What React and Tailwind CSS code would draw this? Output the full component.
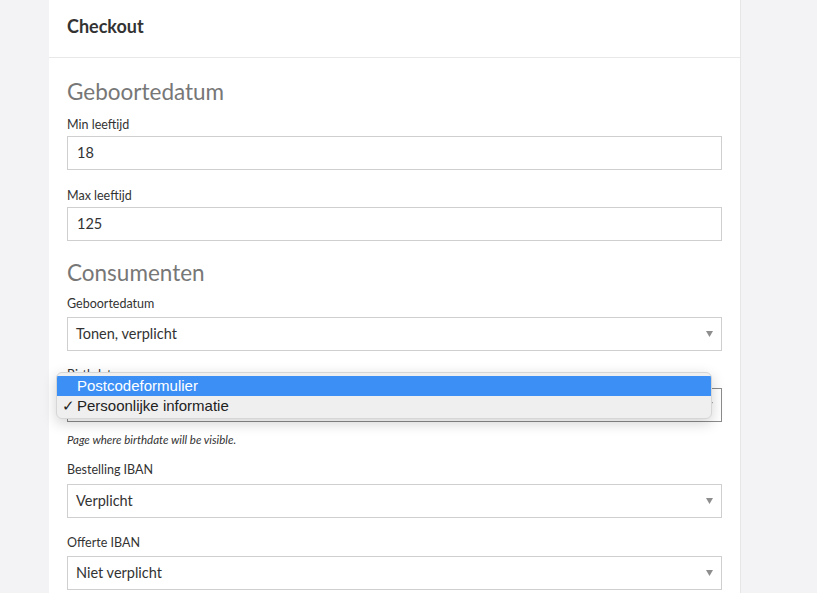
import React from 'react';

const font = { fontFamily: 'Lato, "Open Sans", sans-serif' };

function Caret() {
  return (
    <svg width="7" height="6" viewBox="0 0 7 6" className="shrink-0">
      <path d="M0 0 L7 0 L3.5 6 Z" fill="#8e8e8e" />
    </svg>
  );
}

function Label({ children, className = '' }) {
  return <div className={`text-[12.5px] leading-4 text-[#333] ${className}`}>{children}</div>;
}

function TextField({ value }) {
  return (
    <div className="h-[34px] border border-[#cfcfcf] bg-white flex items-center px-[9px] text-[14.5px] text-[#333]">
      {value}
    </div>
  );
}

function SelectField({ value, focused }) {
  return (
    <div
      className={`h-[34px] border ${focused ? 'border-[#8c8c8c]' : 'border-[#cfcfcf]'} bg-white flex items-center justify-between pl-[8px] pr-[8px] text-[14.5px] text-[#333]`}
    >
      <span>{value}</span>
      <Caret />
    </div>
  );
}

function PageOptions() {
  // native option list opened over the birthdate select
  return (
    <div
      className="absolute left-[-11px] top-[-16px] w-[656px] h-[47px] rounded-[6px] bg-[#efefef] border border-[#d6d6d6] shadow-[0_4px_14px_rgba(0,0,0,0.18)] pt-[3px] text-[15px] leading-[20px] overflow-hidden"
      style={{ fontFamily: '"Liberation Sans", Arial, sans-serif' }}
    >
      <div className="h-[20px] bg-[#3b8ff5] text-white pl-[20px]">Postcodeformulier</div>
      <div className="h-[20px] text-[#222] flex">
        <span className="w-[20px] pl-[5px]">✓</span>
        <span>Persoonlijke informatie</span>
      </div>
    </div>
  );
}

export default function App() {
  return (
    <div className="min-h-screen bg-[#f3f3f5] flex" style={font}>
      <div className="ml-[49px] w-[692px] bg-white border-r border-[#e6e6e6] min-h-[593px]">
        <div className="h-[58px] border-b border-[#e8e8e8] px-[18px] flex items-center pb-[4px]">
          <h1 className="text-[18px] font-bold text-[#333]">Checkout</h1>
        </div>

        <div className="px-[18px] flex flex-col">
          <h2 className="mt-[21px] text-[22.5px] leading-[26px] text-[#777]">Geboortedatum</h2>
          <Label className="mt-[12px] mb-[3px]">Min leeftijd</Label>
          <TextField value="18" />
          <Label className="mt-[18px] mb-[3px]">Max leeftijd</Label>
          <TextField value="125" />

          <h2 className="mt-[19px] text-[22.5px] leading-[26px] text-[#777]">Consumenten</h2>
          <Label className="mt-[10px] mb-[5px]">Geboortedatum</Label>
          <SelectField value="Tonen, verplicht" />

          <Label className="mt-[16px] mb-[5px]">Birthdate page</Label>
          <div className="relative">
            <SelectField value="Persoonlijke informatie" focused />
            <PageOptions />
          </div>
          <div className="mt-[10px] text-[11.5px] leading-4 italic text-[#333]">Page where birthdate will be visible.</div>

          <Label className="mt-[14px] mb-[6px]">Bestelling IBAN</Label>
          <SelectField value="Verplicht" />
          <Label className="mt-[17px] mb-[5px]">Offerte IBAN</Label>
          <SelectField value="Niet verplicht" />
        </div>
      </div>
    </div>
  );
}
